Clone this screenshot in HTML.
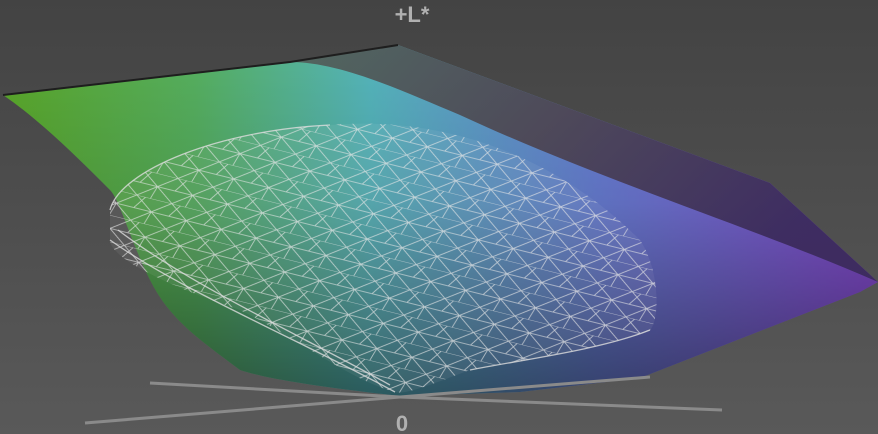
<!DOCTYPE html>
<html><head><style>
html,body{margin:0;padding:0;width:878px;height:434px;overflow:hidden;background:#4a4a4a;}
svg{display:block}
</style></head><body>
<svg width="878" height="434" viewBox="0 0 878 434" xmlns="http://www.w3.org/2000/svg">
<defs>
<linearGradient id="bg" x1="0" y1="0" x2="0" y2="1">
<stop offset="0" stop-color="#434343"/><stop offset="1" stop-color="#595959"/></linearGradient>
<linearGradient id="main" x1="0" y1="0" x2="1" y2="0">
<stop offset="0" stop-color="#5aa82a"/>
<stop offset="0.22" stop-color="#56b060"/>
<stop offset="0.42" stop-color="#55b5bc"/>
<stop offset="0.68" stop-color="#6a80d8"/>
<stop offset="1" stop-color="#8a4ed8"/></linearGradient>
<linearGradient id="shade" x1="0" y1="0" x2="0" y2="1">
<stop offset="0" stop-color="#000" stop-opacity="0"/>
<stop offset="0.45" stop-color="#000" stop-opacity="0.12"/>
<stop offset="1" stop-color="#000" stop-opacity="0.5"/></linearGradient>
<linearGradient id="top" x1="0" y1="0" x2="1" y2="0.4">
<stop offset="0" stop-color="#52605a"/>
<stop offset="0.5" stop-color="#4c4450"/>
<stop offset="1" stop-color="#3a2a5a"/></linearGradient>
<pattern id="mesh" width="36" height="26" patternUnits="userSpaceOnUse" patternTransform="rotate(14)">
<path d="M0 0L36 0M0 13L36 13M0 0L18 13L36 0M0 26L18 13L36 26M18 13L14 26M9 0L0 13" stroke="#e6e6e6" stroke-width="0.8" fill="none" stroke-opacity="0.75"/>
</pattern>
<clipPath id="blob"><path d="M110 210 C120 170 220 130 330 125 C450 115 560 160 640 240 C660 270 660 320 650 330 C600 350 520 360 470 370 C430 385 405 395 395 392 C350 380 300 340 240 310 C180 290 110 260 110 240 Z"/></clipPath>
</defs>
<rect width="878" height="434" fill="url(#bg)"/>
<path d="M3 95 L290 62 L398 45 L770 183 L878 282 L860 292 L640 378 L520 392 L400 396 C330 388 270 380 240 370 C200 340 170 320 150 280 C130 240 120 200 110 190 C80 160 40 120 3 95 Z" fill="url(#main)"/>
<path d="M3 95 L290 62 L398 45 L770 183 L878 282 L860 292 L640 378 L520 392 L400 396 C330 388 270 380 240 370 C200 340 170 320 150 280 C130 240 120 200 110 190 C80 160 40 120 3 95 Z" fill="url(#shade)"/>
<path d="M290 62 L398 45 L770 183 L878 282 C760 230 600 180 460 115 C400 90 340 62 290 62 Z" fill="url(#top)" opacity="0.92"/>
<path d="M3 95 L290 62 L398 45" stroke="#1e1e1e" stroke-width="2" fill="none"/>
<g clip-path="url(#blob)">
<rect x="100" y="110" width="570" height="290" fill="#ffffff" opacity="0.06"/>
<rect x="100" y="110" width="570" height="290" fill="url(#mesh)"/>
</g>
<path d="M110 210 C120 170 220 130 330 125 M110 240 C180 290 300 340 395 392 M118 230 C190 285 300 335 390 385 M650 330 C600 350 520 360 470 370" stroke="#dddddd" stroke-width="1.3" fill="none" opacity="0.8"/>
<g stroke="#8a8a8a" stroke-width="3" fill="none">
<line x1="150" y1="383" x2="400" y2="397"/>
<line x1="400" y1="397" x2="650" y2="377"/>
<line x1="85" y1="423" x2="400" y2="397"/>
<line x1="400" y1="397" x2="722" y2="410"/>
</g>
<text x="412" y="22" text-anchor="middle" font-family="Liberation Sans, sans-serif" font-weight="bold" font-size="22" fill="#b0b0b0">+L*</text>
<text x="402" y="431" text-anchor="middle" font-family="Liberation Sans, sans-serif" font-weight="bold" font-size="22" fill="#b0b0b0">0</text>
</svg>
</body></html>
